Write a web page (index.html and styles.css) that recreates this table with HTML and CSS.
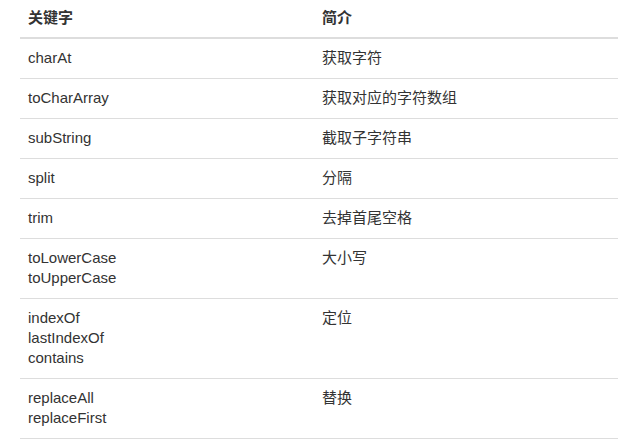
FILE: index.html
```html
<!DOCTYPE html>
<html>
<head>
<meta charset="utf-8">
<link rel="stylesheet" href="styles.css">
</head>
<body>
<div class="wrap">
<table class="tbl">
  <thead>
    <tr><th class="c1">关键字</th><th>简介</th></tr>
  </thead>
  <tbody>
    <tr><td>charAt</td><td>获取字符</td></tr>
    <tr><td>toCharArray</td><td>获取对应的字符数组</td></tr>
    <tr><td>subString</td><td>截取子字符串</td></tr>
    <tr><td>split</td><td>分隔</td></tr>
    <tr><td>trim</td><td>去掉首尾空格</td></tr>
    <tr><td>toLowerCase<br>toUpperCase</td><td>大小写</td></tr>
    <tr><td>indexOf<br>lastIndexOf<br>contains</td><td>定位</td></tr>
    <tr><td>replaceAll<br>replaceFirst</td><td>替换</td></tr>
  </tbody>
</table>
</div>
</body>
</html>
```
FILE: styles.css
```css
html, body {
  margin: 0;
  padding: 0;
  background: #fff;
}
.wrap {
  padding: 0 0 0 20px;
}
.tbl {
  width: 598px;
  border-collapse: collapse;
  border-spacing: 0;
  font-family: "Liberation Sans", "Noto Sans CJK SC", sans-serif;
  font-size: 15px;
  line-height: 20px;
  color: #333;
  table-layout: fixed;
}
.tbl th {
  text-align: left;
  font-weight: bold;
  padding: 8px 8px 9px;
  border-bottom: 2px solid #ddd;
  vertical-align: bottom;
}
.tbl th.c1 {
  width: 278px;
}
.tbl td {
  padding: 9px 8px 10px;
  border-bottom: 1px solid #ddd;
  vertical-align: top;
}
```
